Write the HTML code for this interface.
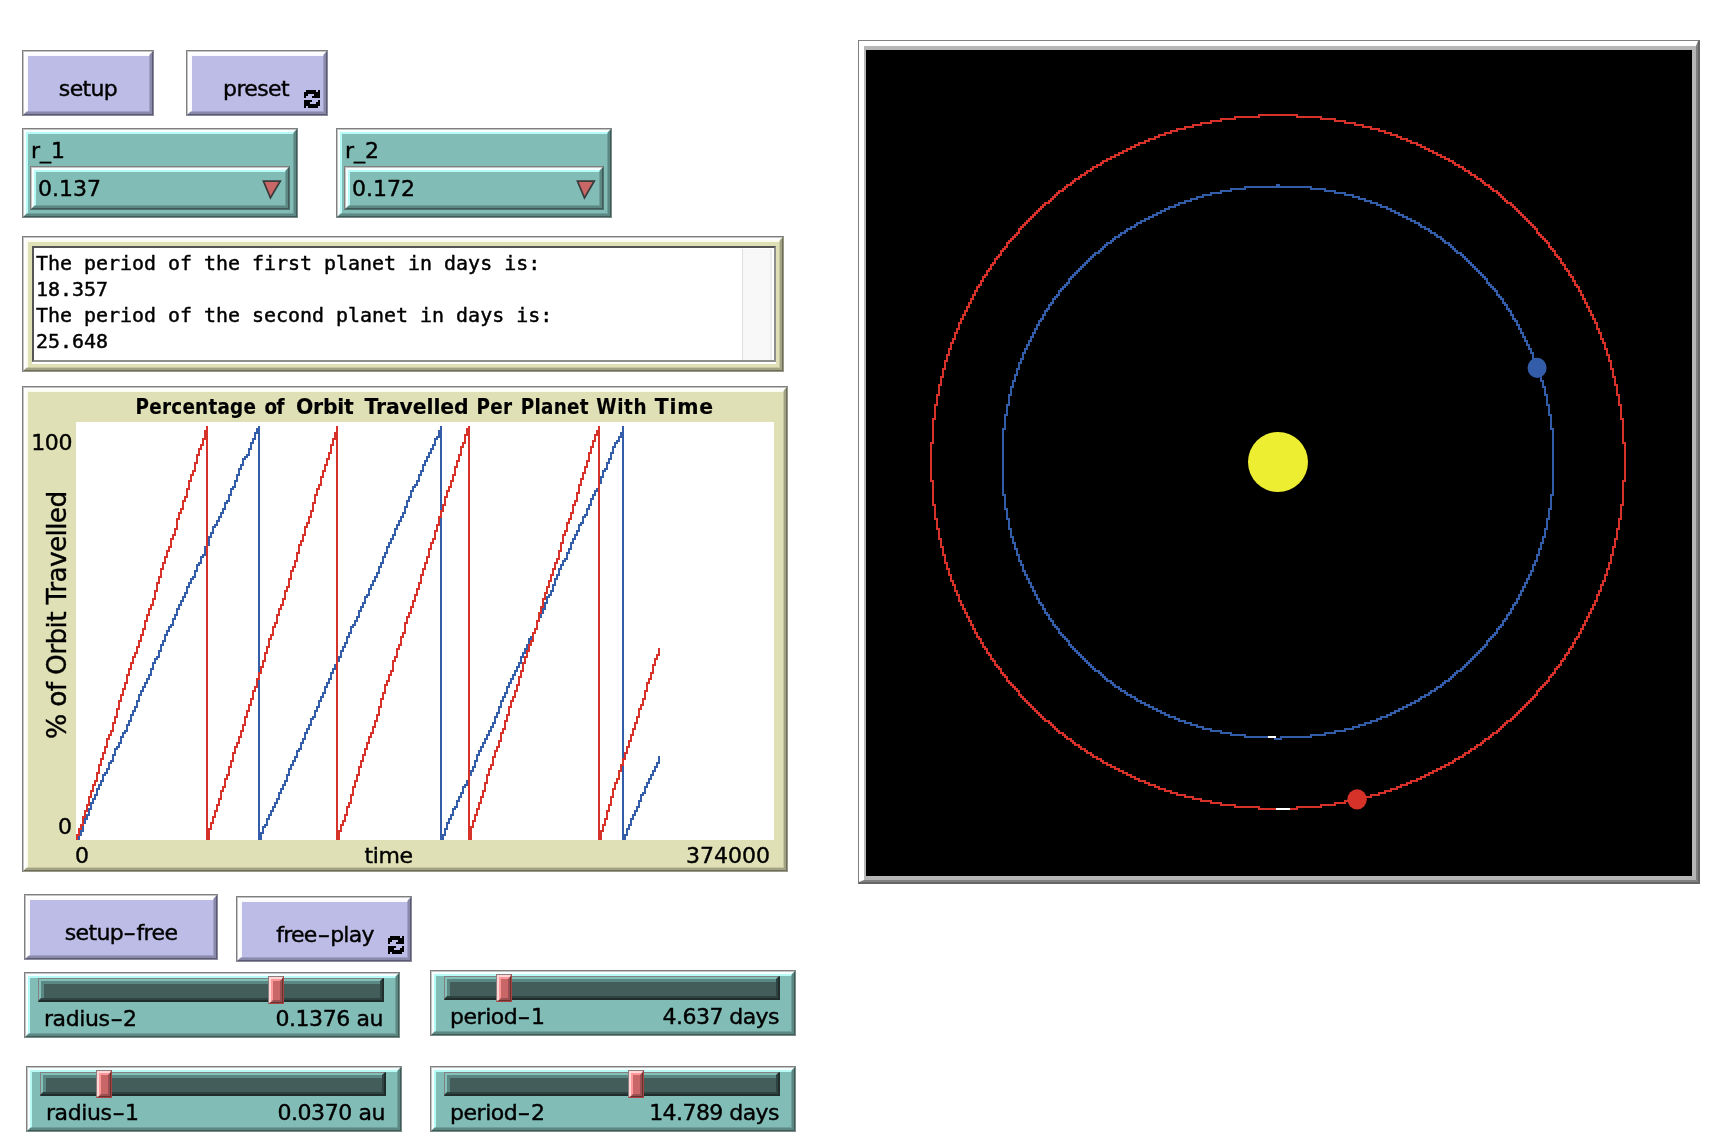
<!DOCTYPE html>
<html lang="en">
<head>
<meta charset="utf-8">
<title>Orbit periods</title>
<style>
html,body{margin:0;padding:0;background:#fff;}
body{width:1726px;height:1148px;position:relative;overflow:hidden;
 font-family:"DejaVu Sans","Liberation Sans",sans-serif;font-size:22px;color:#000;-webkit-text-stroke:0.4px #000;}
div,span,svg{position:absolute;box-sizing:border-box;}
#app{left:0;top:0;width:1726px;height:1148px;will-change:transform;}
span{white-space:pre;line-height:26px;}
i{position:absolute;display:block;box-sizing:border-box;}
.bv,.bv::before,.bw,.bw::before{position:absolute;box-sizing:border-box;border-style:solid;content:"";}
.bv{left:0;top:0;right:0;bottom:0;border-width:1px;border-color:var(--a1) var(--a2) var(--a2) var(--a1);}
.bv::before{left:0;top:0;right:0;bottom:0;border-width:1px;border-color:var(--b1) var(--b2) var(--b2) var(--b1);}
.bw{left:2px;top:2px;right:2px;bottom:2px;border-width:2px;border-color:var(--c1) var(--c2) var(--c2) var(--c1);}
.bw::before{left:0;top:0;right:0;bottom:0;border-width:2px 1px 1px 2px;border-color:var(--d1) var(--d2) var(--d2) var(--d1);}
.btn{background:#bcbce6;--a1:#7f7f7f;--b1:#c4c4c4;--c1:#fff;--d1:#fbfbff;--a2:#8b8b9d;--b2:#5a5a73;--c2:#8989aa;--d2:#a0a0c6;}
.bl{left:0;right:0;width:100%;text-align:center;top:26px;}
.hy{position:static;display:inline-block;transform:scaleX(1.6);width:13.5px;text-align:center;letter-spacing:0;}
.teal{background:#82bcb6;--a1:#7f7f7f;--b1:#c4c4c4;--c1:#f6ffff;--d1:#b6fbf7;--a2:#788c8a;--b2:#3e5b58;--c2:#5d8783;--d2:#6e9f9a;}
.cl{left:9px;top:9.5px;}
.cbox{left:8px;top:38px;right:8px;height:44px;--a2:#4e716d;}
.cv{left:8px;top:10px;}
.tri{right:7px;top:12px;}
.track{left:14px;top:6px;height:24px;background:#435e5a;border-style:solid;border-width:1px 2px 2px 1px;border-color:#828080 #1f2d2b #1f2d2b #828080;}
.t1{left:0;top:0;right:0;bottom:0;border-style:solid;border-width:2px;border-color:#84c0ba #2f4442 #2f4442 #84c0ba;}
.t1::before{content:"";position:absolute;left:0;top:0;right:0;bottom:0;border-style:solid;border-width:3px 0 0 3px;border-color:#5c8884;}
.handle{top:4px;width:16px;height:28px;background:#c96668;border-style:solid;border-width:1px;border-color:#8c7c7c #a84444 #a84444 #8c7c7c;}
.h1{left:0;top:0;right:0;bottom:0;border-style:solid;border-width:2px 1px 1px 2px;border-color:#ffd6d6 #6a3030 #6a3030 #ffd6d6;}
.h1::before{content:"";position:absolute;left:0;top:0;right:0;bottom:0;border-style:solid;border-width:2px;border-color:#ff9898 #985050 #985050 #ff9898;}
.sl{left:20px;top:34px;}
.sv{right:17px;top:34px;text-align:right;}
.olive{background:#e0e0b6;--a1:#7f7f7f;--b1:#c4c4c4;--c1:#fff;--d1:#fbfbf0;--a2:#999989;--b2:#6e6e58;--c2:#a2a285;--d2:#c6c6a2;}
#out{left:22px;top:236px;width:762px;height:136px;}
#outtxt{left:10px;top:10px;width:744px;height:116px;background:#fff;box-shadow:0 2px 0 #fff;border:2px solid #8e8e8e;border-top-color:#555;border-left-color:#555;
 font-family:"DejaVu Sans Mono","Liberation Mono",monospace;font-size:19.95px;-webkit-text-stroke:0.45px #000;}
#outtxt span{left:2px;line-height:26px;}
#sb{right:2px;top:1px;bottom:0;width:30px;background:#f8f8f8;border-left:1px solid #e0e0e0;border-right:2px solid #ededed;}
#plot{left:22px;top:386px;width:766px;height:486px;}
#parea{left:54px;top:36px;width:698px;height:418px;background:#fff;}
#ptitle{left:0;top:7.5px;width:766px;height:26px;font-weight:bold;font-size:20.4px;-webkit-text-stroke:0.15px #000;white-space:pre;}
#ptitle span{top:0;}
#view{left:858px;top:40px;width:842px;height:844px;background:#000;}
.v1,.v1::before,.v1::after{position:absolute;box-sizing:border-box;border-style:solid;content:"";}
.v1{left:0;top:0;right:0;bottom:0;border-width:1px 2px 2px 1px;border-color:#808080 #666 #666 #808080;}
.v1::before{left:0;top:0;right:0;bottom:0;border-width:5px 2px 2px 5px;border-color:#fff #808080 #808080 #fff;}
.v1::after{left:5px;top:5px;right:2px;bottom:2px;border-width:4px 4px 4px 2px;border-color:#b6b6b6;}
</style>
</head>
<body>
<div id="app">
<div class="btn" style="left:22px;top:50px;width:132px;height:66px"><i class="bv"></i><i class="bw"></i><span class="bl" style="letter-spacing:-0.65px;left:0px">setup</span></div>
<div class="btn" style="left:186px;top:50px;width:142px;height:66px"><i class="bv"></i><i class="bw"></i><span class="bl" style="letter-spacing:-0.65px;left:-1px">preset</span><svg class="ico" style="left:118px;top:40px" width="16" height="18" viewBox="0 0 16 18" shape-rendering="crispEdges"><path d="M2 0h10v2h-10zM14 0h2v2h-2zM0 2h16v2h-16zM0 4h4v2h-4zM10 4h6v2h-6zM0 6h2v2h-2zM8 6h8v2h-8zM0 10h8v2h-8zM14 10h2v2h-2zM0 12h6v2h-6zM12 12h4v2h-4zM0 14h16v2h-16zM0 16h2v2h-2zM4 16h10v2h-10z" fill="#000"/></svg></div>
<div class="teal" style="left:22px;top:128px;width:276px;height:90px"><i class="bv"></i><i class="bw"></i><span class="cl">r_1</span><div class="teal cbox"><i class="bv"></i><i class="bw"></i><span class="cv">0.137</span><svg class="tri" width="24" height="24" viewBox="0 0 24 24"><path d="M4.4 3.05H21.3L11.45 19.9z" fill="#c96767" stroke="#3a3a3a" stroke-width="1.7" stroke-linejoin="miter"/></svg></div></div>
<div class="teal" style="left:336px;top:128px;width:276px;height:90px"><i class="bv"></i><i class="bw"></i><span class="cl">r_2</span><div class="teal cbox"><i class="bv"></i><i class="bw"></i><span class="cv">0.172</span><svg class="tri" width="24" height="24" viewBox="0 0 24 24"><path d="M4.4 3.05H21.3L11.45 19.9z" fill="#c96767" stroke="#3a3a3a" stroke-width="1.7" stroke-linejoin="miter"/></svg></div></div>

<div id="out" class="olive"><i class="bv"></i><i class="bw"></i><div id="outtxt">
<span style="top:2px">The period of the first planet in days is:</span>
<span style="top:28px">18.357</span>
<span style="top:54px">The period of the second planet in days is:</span>
<span style="top:80px">25.648</span>
<div id="sb"></div>
</div></div>

<div id="plot" class="olive"><i class="bv"></i><i class="bw"></i>
<div id="ptitle"><span style="left:113.6px;letter-spacing:0.25px;font-family:'DejaVu Sans Condensed','DejaVu Sans',sans-serif">Percentage</span> <span style="left:242.38px;letter-spacing:-0.37px;font-family:'DejaVu Sans Condensed','DejaVu Sans',sans-serif">of</span> <span style="left:274.02px;letter-spacing:-0.25px">Orbit</span> <span style="left:342.4px;letter-spacing:-0.1px">Travelled</span> <span style="left:454.44px;letter-spacing:0.4px;font-family:'DejaVu Sans Condensed','DejaVu Sans',sans-serif">Per</span> <span style="left:498.68px;letter-spacing:0.29px;font-family:'DejaVu Sans Condensed','DejaVu Sans',sans-serif">Planet</span> <span style="left:574.3px;letter-spacing:0.63px;font-family:'DejaVu Sans Condensed','DejaVu Sans',sans-serif">With</span> <span style="left:632.72px;letter-spacing:0.8px">Time</span></div>
<div id="parea"></div>
<span id="ymax" style="right:716px;top:44px;text-align:right;letter-spacing:-0.4px">100</span>
<span id="ymin" style="right:716px;top:427.5px;text-align:right">0</span>
<span id="xmin" style="left:53px;top:456.5px">0</span>
<span id="xmax" style="right:18px;top:456.5px;text-align:right">374000</span>
<span id="xlab" style="left:342.5px;top:456.5px;letter-spacing:-0.4px">time</span>
<span id="ylab" style="left:20px;top:353px;font-size:26.5px;letter-spacing:-0.7px;line-height:30px;transform-origin:0 0;transform:rotate(-90deg)">% of Orbit Travelled</span>
</div>
<svg id="plotsvg" style="left:0;top:0" width="800" height="880" viewBox="0 0 800 880" shape-rendering="crispEdges">
<path d="M76 838h2V840h-2zM78 834h2V840h-2zM80 830h2V836h-2zM82 822h2V832h-2zM84 818h2V824h-2zM86 814h2V820h-2zM88 808h2V816h-2zM90 802h2V810h-2zM92 798h2V804h-2zM94 794h2V800h-2zM96 788h2V796h-2zM98 784h2V790h-2zM100 780h2V786h-2zM102 774h2V782h-2zM104 772h2V776h-2zM106 768h2V774h-2zM108 762h2V770h-2zM110 760h2V764h-2zM112 754h2V762h-2zM114 748h2V756h-2zM116 746h2V750h-2zM118 742h2V748h-2zM120 736h2V744h-2zM122 732h2V738h-2zM124 730h2V734h-2zM126 724h2V732h-2zM128 720h2V726h-2zM130 714h2V722h-2zM132 710h2V716h-2zM134 706h2V712h-2zM136 700h2V708h-2zM138 694h2V702h-2zM140 690h2V696h-2zM142 686h2V692h-2zM144 682h2V688h-2zM146 678h2V684h-2zM148 674h2V680h-2zM150 668h2V676h-2zM152 662h2V670h-2zM154 658h2V664h-2zM156 656h2V660h-2zM158 650h2V658h-2zM160 644h2V652h-2zM162 640h2V646h-2zM164 634h2V642h-2zM166 630h2V636h-2zM168 626h2V632h-2zM170 624h2V628h-2zM172 618h2V626h-2zM174 614h2V620h-2zM176 608h2V616h-2zM178 604h2V610h-2zM180 600h2V606h-2zM182 596h2V602h-2zM184 592h2V598h-2zM186 586h2V594h-2zM188 582h2V588h-2zM190 578h2V584h-2zM192 576h2V580h-2zM194 570h2V578h-2zM196 564h2V572h-2zM198 562h2V566h-2zM200 556h2V564h-2zM202 554h2V558h-2zM204 546h2V556h-2zM206 544h2V548h-2zM208 536h2V546h-2zM210 532h2V538h-2zM212 526h2V534h-2zM214 524h2V528h-2zM216 520h2V526h-2zM218 516h2V522h-2zM220 512h2V518h-2zM222 508h2V514h-2zM224 502h2V510h-2zM226 500h2V504h-2zM228 494h2V502h-2zM230 488h2V496h-2zM232 486h2V490h-2zM234 480h2V488h-2zM236 474h2V482h-2zM238 468h2V476h-2zM240 464h2V470h-2zM242 458h2V466h-2zM244 456h2V460h-2zM246 454h2V458h-2zM248 448h2V456h-2zM250 442h2V450h-2zM252 438h2V444h-2zM254 432h2V440h-2zM256 428h2V434h-2zM258 426h2V840h-2zM260 832h2V840h-2zM262 826h2V834h-2zM264 824h2V828h-2zM266 818h2V826h-2zM268 814h2V820h-2zM270 810h2V816h-2zM272 806h2V812h-2zM274 802h2V808h-2zM276 798h2V804h-2zM278 792h2V800h-2zM280 788h2V794h-2zM282 784h2V790h-2zM284 780h2V786h-2zM286 774h2V782h-2zM288 768h2V776h-2zM290 764h2V770h-2zM292 760h2V766h-2zM294 756h2V762h-2zM296 750h2V758h-2zM298 748h2V752h-2zM300 742h2V750h-2zM302 738h2V744h-2zM304 732h2V740h-2zM306 728h2V734h-2zM308 724h2V730h-2zM310 718h2V726h-2zM312 716h2V720h-2zM314 710h2V718h-2zM316 706h2V712h-2zM318 700h2V708h-2zM320 696h2V702h-2zM322 692h2V698h-2zM324 686h2V694h-2zM326 682h2V688h-2zM328 678h2V684h-2zM330 672h2V680h-2zM332 668h2V674h-2zM334 664h2V670h-2zM336 660h2V666h-2zM338 656h2V662h-2zM340 650h2V658h-2zM342 646h2V652h-2zM344 642h2V648h-2zM346 636h2V644h-2zM348 632h2V638h-2zM350 626h2V634h-2zM352 624h2V628h-2zM354 620h2V626h-2zM356 616h2V622h-2zM358 610h2V618h-2zM360 606h2V612h-2zM362 602h2V608h-2zM364 596h2V604h-2zM366 594h2V598h-2zM368 588h2V596h-2zM370 584h2V590h-2zM372 580h2V586h-2zM374 576h2V582h-2zM376 572h2V578h-2zM378 566h2V574h-2zM380 562h2V568h-2zM382 556h2V564h-2zM384 552h2V558h-2zM386 546h2V554h-2zM388 542h2V548h-2zM390 538h2V544h-2zM392 534h2V540h-2zM394 528h2V536h-2zM396 524h2V530h-2zM398 520h2V526h-2zM400 516h2V522h-2zM402 512h2V518h-2zM404 506h2V514h-2zM406 500h2V508h-2zM408 496h2V502h-2zM410 490h2V498h-2zM412 486h2V492h-2zM414 484h2V488h-2zM416 480h2V486h-2zM418 474h2V482h-2zM420 470h2V476h-2zM422 464h2V472h-2zM424 460h2V466h-2zM426 456h2V462h-2zM428 452h2V458h-2zM430 448h2V454h-2zM432 444h2V450h-2zM434 438h2V446h-2zM436 436h2V440h-2zM438 430h2V438h-2zM440 426h2V840h-2zM442 834h2V840h-2zM444 828h2V836h-2zM446 822h2V830h-2zM448 818h2V824h-2zM450 814h2V820h-2zM452 808h2V816h-2zM454 806h2V810h-2zM456 800h2V808h-2zM458 796h2V802h-2zM460 792h2V798h-2zM462 786h2V794h-2zM464 784h2V788h-2zM466 780h2V786h-2zM468 774h2V782h-2zM470 770h2V776h-2zM472 766h2V772h-2zM474 760h2V768h-2zM476 754h2V762h-2zM478 750h2V756h-2zM480 746h2V752h-2zM482 742h2V748h-2zM484 738h2V744h-2zM486 734h2V740h-2zM488 730h2V736h-2zM490 726h2V732h-2zM492 722h2V728h-2zM494 716h2V724h-2zM496 712h2V718h-2zM498 706h2V714h-2zM500 700h2V708h-2zM502 696h2V702h-2zM504 692h2V698h-2zM506 686h2V694h-2zM508 682h2V688h-2zM510 678h2V684h-2zM512 674h2V680h-2zM514 670h2V676h-2zM516 666h2V672h-2zM518 662h2V668h-2zM520 656h2V664h-2zM522 652h2V658h-2zM524 648h2V654h-2zM526 644h2V650h-2zM528 638h2V646h-2zM530 636h2V640h-2zM532 632h2V638h-2zM534 628h2V634h-2zM536 620h2V630h-2zM538 616h2V622h-2zM540 612h2V618h-2zM542 608h2V614h-2zM544 602h2V610h-2zM546 596h2V604h-2zM548 594h2V598h-2zM550 590h2V596h-2zM552 584h2V592h-2zM554 578h2V586h-2zM556 574h2V580h-2zM558 568h2V576h-2zM560 564h2V570h-2zM562 560h2V566h-2zM564 558h2V562h-2zM566 552h2V560h-2zM568 548h2V554h-2zM570 542h2V550h-2zM572 538h2V544h-2zM574 534h2V540h-2zM576 530h2V536h-2zM578 524h2V532h-2zM580 522h2V526h-2zM582 516h2V524h-2zM584 514h2V518h-2zM586 508h2V516h-2zM588 504h2V510h-2zM590 498h2V506h-2zM592 494h2V500h-2zM594 490h2V496h-2zM596 488h2V492h-2zM598 482h2V490h-2zM600 476h2V484h-2zM602 470h2V478h-2zM604 468h2V472h-2zM606 462h2V470h-2zM608 458h2V464h-2zM610 452h2V460h-2zM612 446h2V454h-2zM614 442h2V448h-2zM616 440h2V444h-2zM618 436h2V442h-2zM620 432h2V438h-2zM622 426h2V840h-2zM624 834h2V840h-2zM626 828h2V836h-2zM628 824h2V830h-2zM630 818h2V826h-2zM632 814h2V820h-2zM634 810h2V816h-2zM636 806h2V812h-2zM638 800h2V808h-2zM640 794h2V802h-2zM642 792h2V796h-2zM644 786h2V794h-2zM646 782h2V788h-2zM648 778h2V784h-2zM650 774h2V780h-2zM652 770h2V776h-2zM654 766h2V772h-2zM656 762h2V768h-2zM658 756h2V764h-2z" fill="#345da9"/>
<path d="M76 834h2V840h-2zM78 828h2V836h-2zM80 824h2V830h-2zM82 816h2V826h-2zM84 810h2V818h-2zM86 804h2V812h-2zM88 796h2V806h-2zM90 790h2V798h-2zM92 784h2V792h-2zM94 780h2V786h-2zM96 772h2V782h-2zM98 764h2V774h-2zM100 758h2V766h-2zM102 752h2V760h-2zM104 746h2V754h-2zM106 738h2V748h-2zM108 734h2V740h-2zM110 730h2V736h-2zM112 722h2V732h-2zM114 716h2V724h-2zM116 708h2V718h-2zM118 700h2V710h-2zM120 694h2V702h-2zM122 688h2V696h-2zM124 682h2V690h-2zM126 674h2V684h-2zM128 668h2V676h-2zM130 662h2V670h-2zM132 656h2V664h-2zM134 652h2V658h-2zM136 646h2V654h-2zM138 640h2V648h-2zM140 634h2V642h-2zM142 628h2V636h-2zM144 620h2V630h-2zM146 614h2V622h-2zM148 608h2V616h-2zM150 604h2V610h-2zM152 598h2V606h-2zM154 590h2V600h-2zM156 582h2V592h-2zM158 576h2V584h-2zM160 568h2V578h-2zM162 562h2V570h-2zM164 556h2V564h-2zM166 550h2V558h-2zM168 546h2V552h-2zM170 538h2V548h-2zM172 534h2V540h-2zM174 528h2V536h-2zM176 518h2V530h-2zM178 512h2V520h-2zM180 508h2V514h-2zM182 500h2V510h-2zM184 496h2V502h-2zM186 488h2V498h-2zM188 480h2V490h-2zM190 474h2V482h-2zM192 470h2V476h-2zM194 462h2V472h-2zM196 454h2V464h-2zM198 448h2V456h-2zM200 444h2V450h-2zM202 438h2V446h-2zM204 430h2V440h-2zM206 426h2V840h-2zM208 828h2V840h-2zM210 822h2V830h-2zM212 816h2V824h-2zM214 810h2V818h-2zM216 804h2V812h-2zM218 798h2V806h-2zM220 790h2V800h-2zM222 786h2V792h-2zM224 778h2V788h-2zM226 774h2V780h-2zM228 766h2V776h-2zM230 760h2V768h-2zM232 752h2V762h-2zM234 746h2V754h-2zM236 742h2V748h-2zM238 736h2V744h-2zM240 730h2V738h-2zM242 724h2V732h-2zM244 716h2V726h-2zM246 710h2V718h-2zM248 704h2V712h-2zM250 698h2V706h-2zM252 690h2V700h-2zM254 686h2V692h-2zM256 678h2V688h-2zM258 672h2V680h-2zM260 666h2V674h-2zM262 660h2V668h-2zM264 652h2V662h-2zM266 646h2V654h-2zM268 638h2V648h-2zM270 634h2V640h-2zM272 626h2V636h-2zM274 622h2V628h-2zM276 614h2V624h-2zM278 608h2V616h-2zM280 604h2V610h-2zM282 598h2V606h-2zM284 590h2V600h-2zM286 586h2V592h-2zM288 578h2V588h-2zM290 570h2V580h-2zM292 566h2V572h-2zM294 560h2V568h-2zM296 552h2V562h-2zM298 544h2V554h-2zM300 540h2V546h-2zM302 534h2V542h-2zM304 526h2V536h-2zM306 522h2V528h-2zM308 516h2V524h-2zM310 510h2V518h-2zM312 502h2V512h-2zM314 494h2V504h-2zM316 488h2V496h-2zM318 484h2V490h-2zM320 476h2V486h-2zM322 470h2V478h-2zM324 464h2V472h-2zM326 458h2V466h-2zM328 452h2V460h-2zM330 444h2V454h-2zM332 438h2V446h-2zM334 432h2V440h-2zM336 426h2V840h-2zM338 830h2V840h-2zM340 824h2V832h-2zM342 820h2V826h-2zM344 814h2V822h-2zM346 806h2V816h-2zM348 802h2V808h-2zM350 794h2V804h-2zM352 786h2V796h-2zM354 780h2V788h-2zM356 774h2V782h-2zM358 766h2V776h-2zM360 760h2V768h-2zM362 754h2V762h-2zM364 748h2V756h-2zM366 742h2V750h-2zM368 736h2V744h-2zM370 732h2V738h-2zM372 726h2V734h-2zM374 720h2V728h-2zM376 714h2V722h-2zM378 706h2V716h-2zM380 698h2V708h-2zM382 692h2V700h-2zM384 684h2V694h-2zM386 680h2V686h-2zM388 674h2V682h-2zM390 670h2V676h-2zM392 660h2V672h-2zM394 656h2V662h-2zM396 648h2V658h-2zM398 644h2V650h-2zM400 636h2V646h-2zM402 632h2V638h-2zM404 622h2V634h-2zM406 616h2V624h-2zM408 612h2V618h-2zM410 606h2V614h-2zM412 600h2V608h-2zM414 594h2V602h-2zM416 588h2V596h-2zM418 582h2V590h-2zM420 574h2V584h-2zM422 568h2V576h-2zM424 562h2V570h-2zM426 556h2V564h-2zM428 548h2V558h-2zM430 542h2V550h-2zM432 538h2V544h-2zM434 530h2V540h-2zM436 524h2V532h-2zM438 516h2V526h-2zM440 510h2V518h-2zM442 504h2V512h-2zM444 496h2V506h-2zM446 490h2V498h-2zM448 486h2V492h-2zM450 480h2V488h-2zM452 474h2V482h-2zM454 466h2V476h-2zM456 460h2V468h-2zM458 454h2V462h-2zM460 446h2V456h-2zM462 442h2V448h-2zM464 434h2V444h-2zM466 428h2V436h-2zM468 426h2V840h-2zM470 826h2V840h-2zM472 820h2V828h-2zM474 814h2V822h-2zM476 808h2V816h-2zM478 802h2V810h-2zM480 796h2V804h-2zM482 790h2V798h-2zM484 782h2V792h-2zM486 774h2V784h-2zM488 768h2V776h-2zM490 764h2V770h-2zM492 756h2V766h-2zM494 750h2V758h-2zM496 746h2V752h-2zM498 740h2V748h-2zM500 732h2V742h-2zM502 728h2V734h-2zM504 720h2V730h-2zM506 714h2V722h-2zM508 706h2V716h-2zM510 700h2V708h-2zM512 696h2V702h-2zM514 690h2V698h-2zM516 684h2V692h-2zM518 676h2V686h-2zM520 670h2V678h-2zM522 662h2V672h-2zM524 656h2V664h-2zM526 650h2V658h-2zM528 644h2V652h-2zM530 640h2V646h-2zM532 632h2V642h-2zM534 628h2V634h-2zM536 620h2V630h-2zM538 612h2V622h-2zM540 606h2V614h-2zM542 598h2V608h-2zM544 592h2V600h-2zM546 586h2V594h-2zM548 580h2V588h-2zM550 574h2V582h-2zM552 568h2V576h-2zM554 562h2V570h-2zM556 558h2V564h-2zM558 550h2V560h-2zM560 542h2V552h-2zM562 534h2V544h-2zM564 530h2V536h-2zM566 522h2V532h-2zM568 518h2V524h-2zM570 512h2V520h-2zM572 504h2V514h-2zM574 500h2V506h-2zM576 492h2V502h-2zM578 484h2V494h-2zM580 478h2V486h-2zM582 472h2V480h-2zM584 466h2V474h-2zM586 460h2V468h-2zM588 452h2V462h-2zM590 446h2V454h-2zM592 440h2V448h-2zM594 434h2V442h-2zM596 430h2V436h-2zM598 426h2V840h-2zM600 830h2V840h-2zM602 824h2V832h-2zM604 818h2V826h-2zM606 810h2V820h-2zM608 804h2V812h-2zM610 796h2V806h-2zM612 788h2V798h-2zM614 782h2V790h-2zM616 778h2V784h-2zM618 770h2V780h-2zM620 764h2V772h-2zM622 758h2V766h-2zM624 752h2V760h-2zM626 746h2V754h-2zM628 740h2V748h-2zM630 734h2V742h-2zM632 728h2V736h-2zM634 722h2V730h-2zM636 716h2V724h-2zM638 708h2V718h-2zM640 704h2V710h-2zM642 698h2V706h-2zM644 690h2V700h-2zM646 682h2V692h-2zM648 678h2V684h-2zM650 672h2V680h-2zM652 664h2V674h-2zM654 658h2V666h-2zM656 654h2V660h-2zM658 648h2V656h-2z" fill="#d73229"/>
</svg>

<div class="btn" style="left:24px;top:894px;width:194px;height:66px"><i class="bv"></i><i class="bw"></i><span class="bl" style="letter-spacing:-0.65px;left:0px">setup<span class="hy">-</span>free</span></div>
<div class="btn" style="left:236px;top:896px;width:176px;height:66px"><i class="bv"></i><i class="bw"></i><span class="bl" style="letter-spacing:-0.75px;left:1px">free<span class="hy">-</span>play</span><svg class="ico" style="left:152px;top:40px" width="16" height="18" viewBox="0 0 16 18" shape-rendering="crispEdges"><path d="M2 0h10v2h-10zM14 0h2v2h-2zM0 2h16v2h-16zM0 4h4v2h-4zM10 4h6v2h-6zM0 6h2v2h-2zM8 6h8v2h-8zM0 10h8v2h-8zM14 10h2v2h-2zM0 12h6v2h-6zM12 12h4v2h-4zM0 14h16v2h-16zM0 16h2v2h-2zM4 16h10v2h-10z" fill="#000"/></svg></div>
<div class="teal" style="left:24px;top:972px;width:376px;height:66px"><i class="bv"></i><i class="bw"></i><div class="track" style="width:346px"><i class="t1"></i></div><div class="handle" style="left:244px"><i class="h1"></i></div><span class="sl" style="letter-spacing:-0.42px">radius<span class="hy">-</span>2</span><span class="sv" style="letter-spacing:-0.42px">0.1376 au</span></div>
<div class="teal" style="left:430px;top:970px;width:366px;height:66px"><i class="bv"></i><i class="bw"></i><div class="track" style="width:336px"><i class="t1"></i></div><div class="handle" style="left:66px"><i class="h1"></i></div><span class="sl" style="letter-spacing:-0.45px">period<span class="hy">-</span>1</span><span class="sv" style="letter-spacing:-0.55px">4.637 days</span></div>
<div class="teal" style="left:26px;top:1066px;width:376px;height:66px"><i class="bv"></i><i class="bw"></i><div class="track" style="width:346px"><i class="t1"></i></div><div class="handle" style="left:70px"><i class="h1"></i></div><span class="sl" style="letter-spacing:-0.42px">radius<span class="hy">-</span>1</span><span class="sv" style="letter-spacing:-0.42px">0.0370 au</span></div>
<div class="teal" style="left:430px;top:1066px;width:366px;height:66px"><i class="bv"></i><i class="bw"></i><div class="track" style="width:336px"><i class="t1"></i></div><div class="handle" style="left:198px"><i class="h1"></i></div><span class="sl" style="letter-spacing:-0.45px">period<span class="hy">-</span>2</span><span class="sv" style="letter-spacing:-0.55px">14.789 days</span></div>

<div id="view"><i class="v1"></i></div>
<svg id="world" style="left:866px;top:50px" width="826" height="826" viewBox="866 50 826 826">
<g shape-rendering="crispEdges" fill="none" stroke-width="2">
<path d="M1258 115h40M1234 117h26M1296 117h26M1220 119h16M1320 119h16M1210 121h12M1334 121h12M1200 123h12M1344 123h12M1192 125h10M1354 125h10M1184 127h10M1362 127h10M1176 129h10M1370 129h10M1170 131h8M1378 131h8M1164 133h8M1384 133h8M1158 135h8M1390 135h8M1154 137h6M1396 137h6M1148 139h8M1400 139h8M1144 141h6M1406 141h6M1138 143h8M1410 143h8M1134 145h6M1416 145h6M1130 147h6M1420 147h6M1126 149h6M1424 149h6M1122 151h6M1428 151h6M1118 153h6M1432 153h6M1114 155h6M1436 155h6M1110 157h6M1440 157h6M1106 159h6M1444 159h6M1102 161h6M1448 161h6M1100 163h4M1452 163h4M1096 165h6M1454 165h6M1092 167h6M1458 167h6M1090 169h4M1462 169h4M1086 171h6M1464 171h6M1084 173h4M1468 173h4M1080 175h6M1470 175h6M1078 177h4M1474 177h4M1074 179h6M1476 179h6M1072 181h4M1480 181h4M1070 183h4M1482 183h4M1066 185h6M1484 185h6M1064 187h4M1488 187h4M1062 189h4M1490 189h4M1058 191h6M1492 191h6M1056 193h4M1496 193h4M1054 195h4M1498 195h4M1052 197h4M1500 197h4M1050 199h4M1502 199h4M1048 201h4M1504 201h4M1044 203h6M1506 203h6M1042 205h4M1510 205h4M1040 207h4M1512 207h4M1038 209h4M1514 209h4M1036 211h4M1516 211h4M1034 213h4M1518 213h4M1032 215h4M1520 215h4M1030 217h4M1522 217h4M1028 219h4M1524 219h4M1026 221h4M1526 221h4M1024 223h4M1528 223h4M1022 225h4M1530 225h4M1020 227h4M1532 227h4M1018 229h4M1534 229h4M1018 231h2M1536 231h2M1016 233h4M1536 233h4M1014 235h4M1538 235h4M1012 237h4M1540 237h4M1010 239h4M1542 239h4M1008 241h4M1544 241h4M1006 243h4M1546 243h4M1006 245h2M1548 245h2M1004 247h4M1548 247h4M1002 249h4M1550 249h4M1000 251h4M1552 251h4M1000 253h2M1554 253h2M998 255h4M1554 255h4M996 257h4M1556 257h4M994 259h4M1558 259h4M994 261h2M1560 261h2M992 263h4M1560 263h4M990 265h4M1562 265h4M990 267h2M1564 267h2M988 269h4M1564 269h4M986 271h4M1566 271h4M986 273h2M1568 273h2M984 275h4M1568 275h4M982 277h4M1570 277h4M982 279h2M1572 279h2M980 281h4M1572 281h4M980 283h2M1574 283h2M978 285h4M1574 285h4M976 287h4M1576 287h4M976 289h2M1578 289h2M974 291h4M1578 291h4M974 293h2M1580 293h2M972 295h4M1580 295h4M972 297h2M1582 297h2M970 299h4M1582 299h4M970 301h2M1584 301h2M968 303h4M1584 303h4M968 305h2M1586 305h2M966 307h4M1586 307h4M966 309h2M1588 309h2M964 311h4M1588 311h4M964 313h2M1590 313h2M962 315h4M1590 315h4M962 317h2M1592 317h2M960 319h4M1592 319h4M960 321h2M1594 321h2M958 323h4M1594 323h4M958 325h2M1596 325h2M958 327h2M1596 327h2M956 329h4M1596 329h4M956 331h2M1598 331h2M954 333h4M1598 333h4M954 335h2M1600 335h2M954 337h2M1600 337h2M952 339h4M1600 339h4M952 341h2M1602 341h2M950 343h4M1602 343h4M950 345h2M1604 345h2M950 347h2M1604 347h2M948 349h4M1604 349h4M948 351h2M1606 351h2M948 353h2M1606 353h2M946 355h4M1606 355h4M946 357h2M1608 357h2M946 359h2M1608 359h2M944 361h4M1608 361h4M944 363h2M1610 363h2M944 365h2M1610 365h2M944 367h2M1610 367h2M942 369h4M1610 369h4M942 371h2M1612 371h2M942 373h2M1612 373h2M942 375h2M1612 375h2M940 377h4M1612 377h4M940 379h2M1614 379h2M940 381h2M1614 381h2M940 383h2M1614 383h2M938 385h4M1614 385h4M938 387h2M1616 387h2M938 389h2M1616 389h2M938 391h2M1616 391h2M938 393h2M1616 393h2M936 395h4M1616 395h4M936 397h2M1618 397h2M936 399h2M1618 399h2M936 401h2M1618 401h2M936 403h2M1618 403h2M934 405h4M1618 405h4M934 407h2M1620 407h2M934 409h2M1620 409h2M934 411h2M1620 411h2M934 413h2M1620 413h2M934 415h2M1620 415h2M934 417h2M1620 417h2M932 419h4M1620 419h4M932 421h2M1622 421h2M932 423h2M1622 423h2M932 425h2M1622 425h2M932 427h2M1622 427h2M932 429h2M1622 429h2M932 431h2M1622 431h2M932 433h2M1622 433h2M932 435h2M1622 435h2M932 437h2M1622 437h2M932 439h2M1622 439h2M932 441h2M1622 441h2M930 443h4M1622 443h4M930 445h2M1624 445h2M930 447h2M1624 447h2M930 449h2M1624 449h2M930 451h2M1624 451h2M930 453h2M1624 453h2M930 455h2M1624 455h2M930 457h2M1624 457h2M930 459h2M1624 459h2M930 461h2M1624 461h2M930 463h2M1624 463h2M930 465h2M1624 465h2M930 467h2M1624 467h2M930 469h2M1624 469h2M930 471h2M1624 471h2M930 473h2M1624 473h2M930 475h2M1624 475h2M930 477h2M1624 477h2M930 479h2M1624 479h2M930 481h4M1622 481h4M932 483h2M1622 483h2M932 485h2M1622 485h2M932 487h2M1622 487h2M932 489h2M1622 489h2M932 491h2M1622 491h2M932 493h2M1622 493h2M932 495h2M1622 495h2M932 497h2M1622 497h2M932 499h2M1622 499h2M932 501h2M1622 501h2M932 503h2M1622 503h2M932 505h4M1620 505h4M934 507h2M1620 507h2M934 509h2M1620 509h2M934 511h2M1620 511h2M934 513h2M1620 513h2M934 515h2M1620 515h2M934 517h2M1620 517h2M934 519h4M1618 519h4M936 521h2M1618 521h2M936 523h2M1618 523h2M936 525h2M1618 525h2M936 527h2M1618 527h2M936 529h4M1616 529h4M938 531h2M1616 531h2M938 533h2M1616 533h2M938 535h2M1616 535h2M938 537h2M1616 537h2M938 539h4M1614 539h4M940 541h2M1614 541h2M940 543h2M1614 543h2M940 545h2M1614 545h2M940 547h4M1612 547h4M942 549h2M1612 549h2M942 551h2M1612 551h2M942 553h2M1612 553h2M942 555h4M1610 555h4M944 557h2M1610 557h2M944 559h2M1610 559h2M944 561h2M1610 561h2M944 563h4M1608 563h4M946 565h2M1608 565h2M946 567h2M1608 567h2M946 569h4M1606 569h4M948 571h2M1606 571h2M948 573h2M1606 573h2M948 575h4M1604 575h4M950 577h2M1604 577h2M950 579h2M1604 579h2M950 581h4M1602 581h4M952 583h2M1602 583h2M952 585h4M1600 585h4M954 587h2M1600 587h2M954 589h2M1600 589h2M954 591h4M1598 591h4M956 593h2M1598 593h2M956 595h4M1596 595h4M958 597h2M1596 597h2M958 599h2M1596 599h2M958 601h4M1594 601h4M960 603h2M1594 603h2M960 605h4M1592 605h4M962 607h2M1592 607h2M962 609h4M1590 609h4M964 611h2M1590 611h2M964 613h4M1588 613h4M966 615h2M1588 615h2M966 617h4M1586 617h4M968 619h2M1586 619h2M968 621h4M1584 621h4M970 623h2M1584 623h2M970 625h4M1582 625h4M972 627h2M1582 627h2M972 629h4M1580 629h4M974 631h2M1580 631h2M974 633h4M1578 633h4M976 635h2M1578 635h2M976 637h4M1576 637h4M978 639h4M1574 639h4M980 641h2M1574 641h2M980 643h4M1572 643h4M982 645h2M1572 645h2M982 647h4M1570 647h4M984 649h4M1568 649h4M986 651h2M1568 651h2M986 653h4M1566 653h4M988 655h4M1564 655h4M990 657h2M1564 657h2M990 659h4M1562 659h4M992 661h4M1560 661h4M994 663h2M1560 663h2M994 665h4M1558 665h4M996 667h4M1556 667h4M998 669h4M1554 669h4M1000 671h2M1554 671h2M1000 673h4M1552 673h4M1002 675h4M1550 675h4M1004 677h4M1548 677h4M1006 679h2M1548 679h2M1006 681h4M1546 681h4M1008 683h4M1544 683h4M1010 685h4M1542 685h4M1012 687h4M1540 687h4M1014 689h4M1538 689h4M1016 691h4M1536 691h4M1018 693h2M1536 693h2M1018 695h4M1534 695h4M1020 697h4M1532 697h4M1022 699h4M1530 699h4M1024 701h4M1528 701h4M1026 703h4M1526 703h4M1028 705h4M1524 705h4M1030 707h4M1522 707h4M1032 709h4M1520 709h4M1034 711h4M1518 711h4M1036 713h4M1516 713h4M1038 715h4M1514 715h4M1040 717h4M1512 717h4M1042 719h4M1510 719h4M1044 721h6M1506 721h6M1048 723h4M1504 723h4M1050 725h4M1502 725h4M1052 727h4M1500 727h4M1054 729h4M1498 729h4M1056 731h4M1496 731h4M1058 733h6M1492 733h6M1062 735h4M1490 735h4M1064 737h4M1488 737h4M1066 739h6M1484 739h6M1070 741h4M1482 741h4M1072 743h4M1480 743h4M1074 745h6M1476 745h6M1078 747h4M1474 747h4M1080 749h6M1470 749h6M1084 751h4M1468 751h4M1086 753h6M1464 753h6M1090 755h4M1462 755h4M1092 757h6M1458 757h6M1096 759h6M1454 759h6M1100 761h4M1452 761h4M1102 763h6M1448 763h6M1106 765h6M1444 765h6M1110 767h6M1440 767h6M1114 769h6M1436 769h6M1118 771h6M1432 771h6M1122 773h6M1428 773h6M1126 775h6M1424 775h6M1130 777h6M1420 777h6M1134 779h6M1416 779h6M1138 781h8M1410 781h8M1144 783h6M1406 783h6M1148 785h8M1400 785h8M1154 787h6M1396 787h6M1158 789h8M1390 789h8M1164 791h8M1384 791h8M1170 793h8M1378 793h8M1176 795h10M1370 795h10M1184 797h10M1362 797h10M1192 799h10M1354 799h10M1200 801h12M1344 801h12M1210 803h12M1334 803h12M1220 805h16M1320 805h16M1234 807h26M1296 807h26M1258 809h40" stroke="#d73229"/>
<path d="M1244 187h68M1230 189h16M1310 189h16M1220 191h12M1324 191h12M1210 193h12M1334 193h12M1202 195h10M1344 195h10M1196 197h8M1352 197h8M1190 199h8M1358 199h8M1184 201h8M1364 201h8M1178 203h8M1370 203h8M1174 205h6M1376 205h6M1168 207h8M1380 207h8M1164 209h6M1386 209h6M1160 211h6M1390 211h6M1156 213h6M1394 213h6M1152 215h6M1398 215h6M1148 217h6M1402 217h6M1144 219h6M1406 219h6M1140 221h6M1410 221h6M1136 223h6M1414 223h6M1134 225h4M1418 225h4M1130 227h6M1420 227h6M1126 229h6M1424 229h6M1124 231h4M1428 231h4M1120 233h6M1430 233h6M1118 235h4M1434 235h4M1114 237h6M1436 237h6M1112 239h4M1440 239h4M1110 241h4M1442 241h4M1106 243h6M1444 243h6M1104 245h4M1448 245h4M1102 247h4M1450 247h4M1100 249h4M1452 249h4M1098 251h4M1454 251h4M1094 253h6M1456 253h6M1092 255h4M1460 255h4M1090 257h4M1462 257h4M1088 259h4M1464 259h4M1086 261h4M1466 261h4M1084 263h4M1468 263h4M1082 265h4M1470 265h4M1080 267h4M1472 267h4M1078 269h4M1474 269h4M1076 271h4M1476 271h4M1074 273h4M1478 273h4M1072 275h4M1480 275h4M1070 277h4M1482 277h4M1068 279h4M1484 279h4M1068 281h2M1486 281h2M1066 283h4M1486 283h4M1064 285h4M1488 285h4M1062 287h4M1490 287h4M1060 289h4M1492 289h4M1058 291h4M1494 291h4M1058 293h2M1496 293h2M1056 295h4M1496 295h4M1054 297h4M1498 297h4M1052 299h4M1500 299h4M1052 301h2M1502 301h2M1050 303h4M1502 303h4M1048 305h4M1504 305h4M1048 307h2M1506 307h2M1046 309h4M1506 309h4M1044 311h4M1508 311h4M1044 313h2M1510 313h2M1042 315h4M1510 315h4M1042 317h2M1512 317h2M1040 319h4M1512 319h4M1038 321h4M1514 321h4M1038 323h2M1516 323h2M1036 325h4M1516 325h4M1036 327h2M1518 327h2M1034 329h4M1518 329h4M1034 331h2M1520 331h2M1032 333h4M1520 333h4M1032 335h2M1522 335h2M1030 337h4M1522 337h4M1030 339h2M1524 339h2M1028 341h4M1524 341h4M1028 343h2M1526 343h2M1026 345h4M1526 345h4M1026 347h2M1528 347h2M1024 349h4M1528 349h4M1024 351h2M1530 351h2M1022 353h4M1530 353h4M1022 355h2M1532 355h2M1022 357h2M1532 357h2M1020 359h4M1532 359h4M1020 361h2M1534 361h2M1018 363h4M1534 363h4M1018 365h2M1536 365h2M1018 367h2M1536 367h2M1016 369h4M1536 369h4M1016 371h2M1538 371h2M1016 373h2M1538 373h2M1014 375h4M1538 375h4M1014 377h2M1540 377h2M1014 379h2M1540 379h2M1012 381h4M1540 381h4M1012 383h2M1542 383h2M1012 385h2M1542 385h2M1010 387h4M1542 387h4M1010 389h2M1544 389h2M1010 391h2M1544 391h2M1010 393h2M1544 393h2M1008 395h4M1544 395h4M1008 397h2M1546 397h2M1008 399h2M1546 399h2M1008 401h2M1546 401h2M1008 403h2M1546 403h2M1006 405h4M1546 405h4M1006 407h2M1548 407h2M1006 409h2M1548 409h2M1006 411h2M1548 411h2M1006 413h2M1548 413h2M1004 415h4M1548 415h4M1004 417h2M1550 417h2M1004 419h2M1550 419h2M1004 421h2M1550 421h2M1004 423h2M1550 423h2M1004 425h2M1550 425h2M1004 427h2M1550 427h2M1002 429h4M1550 429h4M1002 431h2M1552 431h2M1002 433h2M1552 433h2M1002 435h2M1552 435h2M1002 437h2M1552 437h2M1002 439h2M1552 439h2M1002 441h2M1552 441h2M1002 443h2M1552 443h2M1002 445h2M1552 445h2M1002 447h2M1552 447h2M1002 449h2M1552 449h2M1002 451h2M1552 451h2M1002 453h2M1552 453h2M1002 455h2M1552 455h2M1002 457h2M1552 457h2M1002 459h2M1552 459h2M1002 461h2M1552 461h2M1002 463h2M1552 463h2M1002 465h2M1552 465h2M1002 467h2M1552 467h2M1002 469h2M1552 469h2M1002 471h2M1552 471h2M1002 473h2M1552 473h2M1002 475h2M1552 475h2M1002 477h2M1552 477h2M1002 479h2M1552 479h2M1002 481h2M1552 481h2M1002 483h2M1552 483h2M1002 485h2M1552 485h2M1002 487h2M1552 487h2M1002 489h2M1552 489h2M1002 491h2M1552 491h2M1002 493h2M1552 493h2M1002 495h4M1550 495h4M1004 497h2M1550 497h2M1004 499h2M1550 499h2M1004 501h2M1550 501h2M1004 503h2M1550 503h2M1004 505h2M1550 505h2M1004 507h2M1550 507h2M1004 509h4M1548 509h4M1006 511h2M1548 511h2M1006 513h2M1548 513h2M1006 515h2M1548 515h2M1006 517h2M1548 517h2M1006 519h4M1546 519h4M1008 521h2M1546 521h2M1008 523h2M1546 523h2M1008 525h2M1546 525h2M1008 527h2M1546 527h2M1008 529h4M1544 529h4M1010 531h2M1544 531h2M1010 533h2M1544 533h2M1010 535h2M1544 535h2M1010 537h4M1542 537h4M1012 539h2M1542 539h2M1012 541h2M1542 541h2M1012 543h4M1540 543h4M1014 545h2M1540 545h2M1014 547h2M1540 547h2M1014 549h4M1538 549h4M1016 551h2M1538 551h2M1016 553h2M1538 553h2M1016 555h4M1536 555h4M1018 557h2M1536 557h2M1018 559h2M1536 559h2M1018 561h4M1534 561h4M1020 563h2M1534 563h2M1020 565h4M1532 565h4M1022 567h2M1532 567h2M1022 569h2M1532 569h2M1022 571h4M1530 571h4M1024 573h2M1530 573h2M1024 575h4M1528 575h4M1026 577h2M1528 577h2M1026 579h4M1526 579h4M1028 581h2M1526 581h2M1028 583h4M1524 583h4M1030 585h2M1524 585h2M1030 587h4M1522 587h4M1032 589h2M1522 589h2M1032 591h4M1520 591h4M1034 593h2M1520 593h2M1034 595h4M1518 595h4M1036 597h2M1518 597h2M1036 599h4M1516 599h4M1038 601h2M1516 601h2M1038 603h4M1514 603h4M1040 605h4M1512 605h4M1042 607h2M1512 607h2M1042 609h4M1510 609h4M1044 611h2M1510 611h2M1044 613h4M1508 613h4M1046 615h4M1506 615h4M1048 617h2M1506 617h2M1048 619h4M1504 619h4M1050 621h4M1502 621h4M1052 623h2M1502 623h2M1052 625h4M1500 625h4M1054 627h4M1498 627h4M1056 629h4M1496 629h4M1058 631h2M1496 631h2M1058 633h4M1494 633h4M1060 635h4M1492 635h4M1062 637h4M1490 637h4M1064 639h4M1488 639h4M1066 641h4M1486 641h4M1068 643h2M1486 643h2M1068 645h4M1484 645h4M1070 647h4M1482 647h4M1072 649h4M1480 649h4M1074 651h4M1478 651h4M1076 653h4M1476 653h4M1078 655h4M1474 655h4M1080 657h4M1472 657h4M1082 659h4M1470 659h4M1084 661h4M1468 661h4M1086 663h4M1466 663h4M1088 665h4M1464 665h4M1090 667h4M1462 667h4M1092 669h4M1460 669h4M1094 671h6M1456 671h6M1098 673h4M1454 673h4M1100 675h4M1452 675h4M1102 677h4M1450 677h4M1104 679h4M1448 679h4M1106 681h6M1444 681h6M1110 683h4M1442 683h4M1112 685h4M1440 685h4M1114 687h6M1436 687h6M1118 689h4M1434 689h4M1120 691h6M1430 691h6M1124 693h4M1428 693h4M1126 695h6M1424 695h6M1130 697h6M1420 697h6M1134 699h4M1418 699h4M1136 701h6M1414 701h6M1140 703h6M1410 703h6M1144 705h6M1406 705h6M1148 707h6M1402 707h6M1152 709h6M1398 709h6M1156 711h6M1394 711h6M1160 713h6M1390 713h6M1164 715h6M1386 715h6M1168 717h8M1380 717h8M1174 719h6M1376 719h6M1178 721h8M1370 721h8M1184 723h8M1364 723h8M1190 725h8M1358 725h8M1196 727h8M1352 727h8M1202 729h10M1344 729h10M1210 731h12M1334 731h12M1220 733h12M1324 733h12M1230 735h16M1310 735h16M1244 737h68" stroke="#345da9"/>
<path d="M1276 185h4M1274 739h8" stroke="#345da9"/>
<path d="M1276 737h4" stroke="#000"/>
<path d="M1268 737h8M1276 809h14" stroke="#fff"/>
</g>
<circle cx="1278" cy="462" r="30" fill="#eded31"/>
<ellipse cx="1537.1" cy="367.9" rx="9.5" ry="10.1" fill="#345da9"/>
<ellipse cx="1357.1" cy="799.4" rx="9.7" ry="10.2" fill="#d73229"/>
</svg>
</div>
</body>
</html>
